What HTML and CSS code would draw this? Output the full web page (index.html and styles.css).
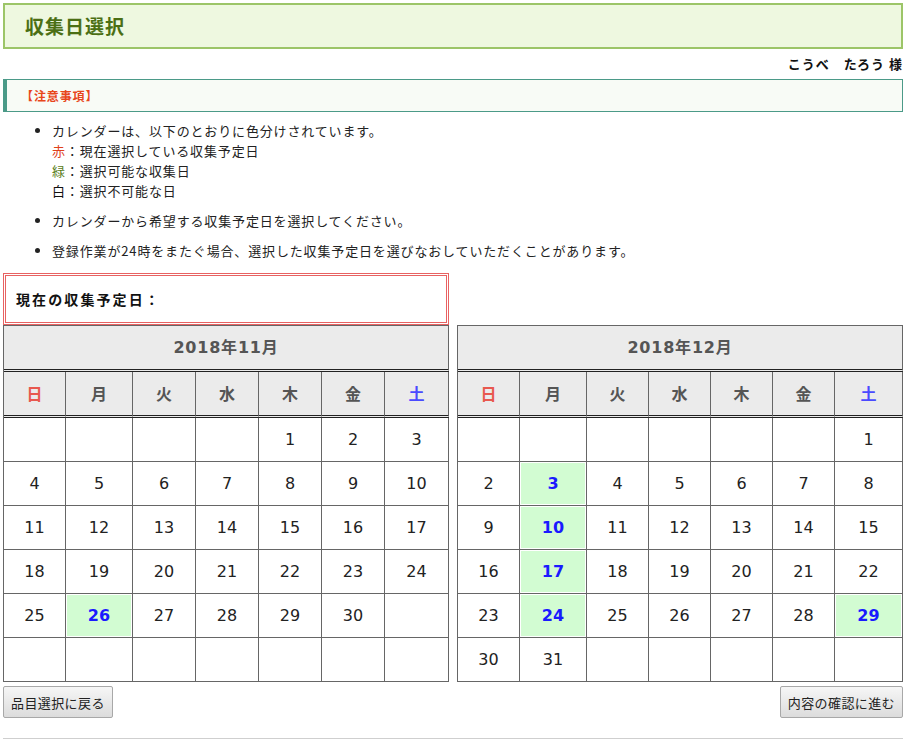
FILE: index.html
```html
<!DOCTYPE html>
<html lang="ja">
<head>
<meta charset="utf-8">
<title>収集日選択</title>
<link rel="stylesheet" href="styles.css">
</head>
<body>
<div class="page">
  <header class="page-head"><h1>収集日選択</h1></header>
  <p class="user">こうべ　たろう 様</p>
  <div class="notice">【注意事項】</div>
  <ul class="notes">
    <li>カレンダーは、以下のとおりに色分けされています。<br><span class="lbl-red">赤</span>：現在選択している収集予定日<br><span class="lbl-green">緑</span>：選択可能な収集日<br><span class="lbl-white">白</span>：選択不可能な日</li>
    <li>カレンダーから希望する収集予定日を選択してください。</li>
    <li>登録作業が24時をまたぐ場合、選択した収集予定日を選びなおしていただくことがあります。</li>
  </ul>
  <div class="current">現在の収集予定日：</div>
  <div class="calendars">
    <section class="cal">
      <div class="cal-title">2018年11月</div>
      <div class="cal-grid nov">
        <div class="dow sun">日</div><div class="dow">月</div><div class="dow">火</div><div class="dow">水</div><div class="dow">木</div><div class="dow">金</div><div class="dow sat">土</div>
        <div class="day"></div><div class="day"></div><div class="day"></div><div class="day"></div><div class="day">1</div><div class="day">2</div><div class="day">3</div>
        <div class="day">4</div><div class="day">5</div><div class="day">6</div><div class="day">7</div><div class="day">8</div><div class="day">9</div><div class="day">10</div>
        <div class="day">11</div><div class="day">12</div><div class="day">13</div><div class="day">14</div><div class="day">15</div><div class="day">16</div><div class="day">17</div>
        <div class="day">18</div><div class="day">19</div><div class="day">20</div><div class="day">21</div><div class="day">22</div><div class="day">23</div><div class="day">24</div>
        <div class="day">25</div><div class="day avail">26</div><div class="day">27</div><div class="day">28</div><div class="day">29</div><div class="day">30</div><div class="day"></div>
        <div class="day"></div><div class="day"></div><div class="day"></div><div class="day"></div><div class="day"></div><div class="day"></div><div class="day"></div>
      </div>
    </section>
    <section class="cal">
      <div class="cal-title">2018年12月</div>
      <div class="cal-grid dec">
        <div class="dow sun">日</div><div class="dow">月</div><div class="dow">火</div><div class="dow">水</div><div class="dow">木</div><div class="dow">金</div><div class="dow sat">土</div>
        <div class="day"></div><div class="day"></div><div class="day"></div><div class="day"></div><div class="day"></div><div class="day"></div><div class="day">1</div>
        <div class="day">2</div><div class="day avail">3</div><div class="day">4</div><div class="day">5</div><div class="day">6</div><div class="day">7</div><div class="day">8</div>
        <div class="day">9</div><div class="day avail">10</div><div class="day">11</div><div class="day">12</div><div class="day">13</div><div class="day">14</div><div class="day">15</div>
        <div class="day">16</div><div class="day avail">17</div><div class="day">18</div><div class="day">19</div><div class="day">20</div><div class="day">21</div><div class="day">22</div>
        <div class="day">23</div><div class="day avail">24</div><div class="day">25</div><div class="day">26</div><div class="day">27</div><div class="day">28</div><div class="day avail">29</div>
        <div class="day">30</div><div class="day">31</div><div class="day"></div><div class="day"></div><div class="day"></div><div class="day"></div><div class="day"></div>
      </div>
    </section>
  </div>
  <div class="actions">
    <button class="btn" type="button">品目選択に戻る</button>
    <button class="btn" type="button">内容の確認に進む</button>
  </div>
  <hr class="rule">
</div>
</body>
</html>
```

FILE: styles.css
```css
html, body {
  margin: 0;
  padding: 0;
  background: #fff;
}
body {
  font-family: "Noto Sans CJK JP", "DejaVu Sans", sans-serif;
  color: #222;
  font-size: 13px;
}
.page {
  width: 900px;
  margin-left: 3px;
  padding-top: 3px;
}
.page-head {
  height: 46px;
  box-sizing: border-box;
  border: 2px solid #9cc568;
  background: #eef8e0;
  display: flex;
  align-items: center;
  padding-left: 20px;
}
.page-head h1 {
  margin: 0;
  font-size: 19px;
  font-weight: bold;
  color: #4b6f14;
  line-height: 24px;
  letter-spacing: 1px;
}
.user {
  margin: 6px 0 0;
  text-align: right;
  font-weight: bold;
  font-size: 13px;
  line-height: 18px;
  letter-spacing: 1px;
  color: #111;
}
.notice {
  margin-top: 6px;
  height: 33px;
  box-sizing: border-box;
  border: 1px solid #4b9a88;
  border-left-width: 4px;
  background: #f8fbf6;
  color: #e8461a;
  font-weight: bold;
  font-size: 12px;
  letter-spacing: 0.9px;
  line-height: 31px;
  padding-left: 14px;
}
.notes {
  margin: 9px 0 0;
  padding-left: 49px;
  line-height: 20px;
  font-size: 13px;
  letter-spacing: 0.85px;
}
.notes li {
  margin-bottom: 10px;
}
.notes li:last-child {
  margin-bottom: 0;
}
.lbl-red { color: #e0401a; }
.lbl-green { color: #5a7d1a; }
.lbl-white { color: #111; }
.current {
  margin-top: 12px;
  width: 446px;
  height: 52px;
  box-sizing: border-box;
  border: 3px double #e86262;
  padding-left: 10px;
  font-weight: bold;
  font-size: 14px;
  letter-spacing: 2.1px;
  line-height: 46px;
  color: #111;
}
.calendars {
  display: flex;
  justify-content: space-between;
}
.cal {
  width: 446px;
  box-sizing: border-box;
  border-left: 1px solid #666;
  border-top: 1px solid #666;
}
.cal-title {
  height: 46px;
  box-sizing: border-box;
  border-right: 1px solid #666;
  border-bottom: 3px double #222;
  background: #ebebeb;
  text-align: center;
  line-height: 43px;
  font-family: "DejaVu Sans", "Noto Sans CJK JP", sans-serif;
  font-weight: bold;
  font-size: 16px;
  letter-spacing: 0.8px;
  color: #555;
}
.cal-grid {
  display: grid;
}
.nov { grid-template-columns: 62px 67px 63px 63px 63px 63px 64px; }
.dec { grid-template-columns: 62px 67px 62px 62px 62px 62px 68px; }
.dow {
  height: 46px;
  box-sizing: border-box;
  border-right: 1px solid #666;
  border-bottom: 3px double #222;
  background: #ebebeb;
  text-align: center;
  line-height: 43px;
  font-weight: bold;
  font-size: 16px;
  color: #555;
}
.dow.sun { color: #e8584e; }
.dow.sat { color: #4a4aff; }
.day {
  height: 44px;
  box-sizing: border-box;
  border-right: 1px solid #666;
  border-bottom: 1px solid #666;
  text-align: center;
  line-height: 43px;
  font-family: "DejaVu Sans", "Noto Sans CJK JP", sans-serif;
  font-size: 16px;
  color: #222;
}
.day.avail {
  background: #d2fcd2;
  box-shadow: inset 0 0 0 1px #fff;
  color: #1a1aff;
  font-weight: bold;
}
.actions {
  margin-top: 4px;
  display: flex;
  justify-content: space-between;
}
.btn {
  height: 32px;
  padding: 0 7px;
  border: 1px solid #a8a8a8;
  border-radius: 2px;
  background: linear-gradient(#f6f6f6, #dcdcdc);
  font-family: "Noto Sans CJK JP", sans-serif;
  font-size: 13px;
  letter-spacing: 0.4px;
  color: #222;
}
.rule {
  margin: 20px 0 0;
  border: 0;
  border-top: 1px solid #cfcfcf;
  height: 0;
}
```
